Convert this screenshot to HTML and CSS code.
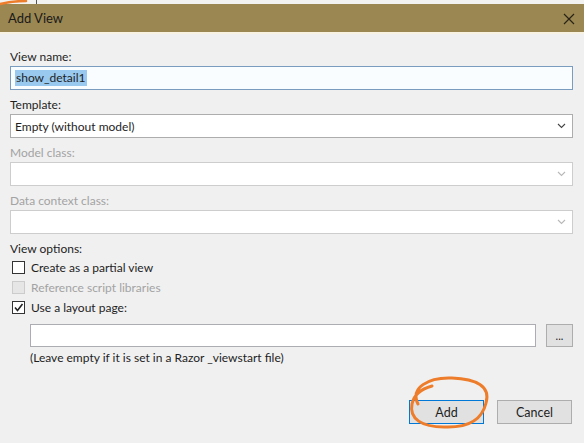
FILE: index.html
```html
<!DOCTYPE html>
<html lang="en">
<head>
    <meta charset="UTF-8">
    <title>Add View</title>
    <link rel="stylesheet" href="styles.css">
</head>
<body>
    <div class="strip"><span class="strip-line"></span></div>
    <div class="titlebar">
        <span class="title">Add View</span>
        <svg class="close" width="12" height="12" viewBox="0 0 12 12">
            <path d="M1 1 L11 11 M11 1 L1 11" stroke="#2a2418" stroke-width="1.2" fill="none"/>
        </svg>
    </div>
    <div class="titleedge"></div>

    <div class="content">
        <div class="field">
            <label class="lbl">View name:</label>
            <div class="textbox focused"><span class="sel">show_detail1</span></div>
        </div>
        <div class="field">
            <label class="lbl">Template:</label>
            <div class="combo">
                <span>Empty (without model)</span>
                <svg class="chev" width="9" height="6" viewBox="0 0 9 6"><path d="M1 1 L4.5 4.5 L8 1" stroke="#444" stroke-width="1.1" fill="none"/></svg>
            </div>
        </div>
        <div class="field">
            <label class="lbl off">Model class:</label>
            <div class="combo disabled">
                <span></span>
                <svg class="chev" width="9" height="6" viewBox="0 0 9 6"><path d="M1 1 L4.5 4.5 L8 1" stroke="#b8b8b8" stroke-width="1.1" fill="none"/></svg>
            </div>
        </div>
        <div class="field">
            <label class="lbl off">Data context class:</label>
            <div class="combo disabled">
                <span></span>
                <svg class="chev" width="9" height="6" viewBox="0 0 9 6"><path d="M1 1 L4.5 4.5 L8 1" stroke="#b8b8b8" stroke-width="1.1" fill="none"/></svg>
            </div>
        </div>

        <div class="options">
            <div class="lbl">View options:</div>
            <div class="check-row"><span class="box"></span>Create as a partial view</div>
            <div class="check-row off"><span class="box dim"></span>Reference script libraries</div>
            <div class="check-row">
                <span class="box">
                    <svg width="11" height="11" viewBox="0 0 11 11"><path d="M2 5.5 L4.5 8.5 L9.5 2" stroke="#222" stroke-width="1.6" fill="none"/></svg>
                </span>Use a layout page:
            </div>
            <div class="layout-row">
                <div class="textbox plain"></div>
                <button class="btn small">...</button>
            </div>
            <div class="hint">(Leave empty if it is set in a Razor _viewstart file)</div>
        </div>

        <div class="actions">
            <button class="btn primary">Add</button>
            <button class="btn">Cancel</button>
        </div>
    </div>

    <!-- marker scribbles on top of the screenshot -->
    <svg class="marker" width="584" height="443" viewBox="0 0 584 443">
        <path d="M0 4 C8 2, 16 1, 26 1" stroke="#ee7d2b" stroke-width="2.5" fill="none" stroke-linecap="round"/>
        <path d="M418 404 C410 388, 428 377, 452 378 C476 379, 491 386, 486 403 C482 420, 468 428, 444 427 C422 427, 409 419, 412 404 C414 394, 421 389, 432 386" stroke="#ee7d2b" stroke-width="3" fill="none" stroke-linecap="round"/>
    </svg>
</body>
</html>
```

FILE: styles.css
```css
body {
    margin: 0;
    width: 584px;
    height: 443px;
    overflow: hidden;
    background-color: #f0f0f0;
    font-family: Lato, "Noto Sans", sans-serif;
    font-size: 12px;
    color: #1e1e1e;
    position: relative;
}
.strip {
    height: 4px;
    background-color: #f2f2f0;
    position: relative;
}
.strip-line {
    position: absolute;
    left: 36px;
    top: 0;
    width: 1px;
    height: 4px;
    background-color: #555;
}
.titlebar {
    height: 28px;
    background-color: #9b8752;
    display: flex;
    align-items: center;
    justify-content: space-between;
    padding: 0 9px 0 8px;
}
.title {
    font-size: 13px;
    color: #1a1a1a;
}
.close {
    margin-top: 1px;
}
.titleedge {
    height: 2px;
    background-color: #f7f2e2;
}
.content {
    padding: 15px 11px 0 10px;
}
.field {
    margin-bottom: 7px;
}
.lbl {
    display: block;
    height: 16px;
    line-height: 16px;
    margin-bottom: 1px;
}
.off {
    color: #a3a3a3;
}
.textbox {
    height: 24px;
    box-sizing: border-box;
    border: 1px solid #abadb3;
    background-color: #fff;
    display: flex;
    align-items: center;
    padding-left: 4px;
}
.textbox.focused {
    border-color: #7a9cbe;
    background-color: #fafdff;
}
.sel {
    background-color: #99c9ef;
    line-height: 16px;
    padding: 0 1px;
}
.combo {
    height: 24px;
    box-sizing: border-box;
    border: 1px solid #adadad;
    background-color: #fff;
    display: flex;
    align-items: center;
    justify-content: space-between;
    padding: 0 6px 0 4px;
}
.combo.disabled {
    border-color: #cdcdcd;
}
.options .lbl {
    margin-bottom: 0;
}
.check-row {
    height: 20px;
    display: flex;
    align-items: center;
    padding-left: 2px;
}
.box {
    width: 13px;
    height: 13px;
    box-sizing: border-box;
    border: 1px solid #333;
    background-color: #fff;
    margin-right: 6px;
    display: flex;
    align-items: center;
    justify-content: center;
}
.box.dim {
    border-color: #cccccc;
    background-color: #e6e6e6;
}
.layout-row {
    display: flex;
    gap: 10px;
    margin-top: 7px;
    padding-left: 20px;
}
.layout-row .textbox {
    flex: 1;
    height: 23px;
}
.btn {
    font-family: inherit;
    font-size: 12.5px;
    color: #1e1e1e;
    background-color: #e1e1e1;
    border: 1px solid #adadad;
    width: 75px;
    height: 24px;
    padding: 0;
}
.btn.small {
    width: 27px;
    height: 23px;
    font-size: 11px;
}
.btn.primary {
    border-color: #0078d7;
}
.hint {
    padding-left: 20px;
    margin-top: 3px;
    line-height: 16px;
}
.actions {
    display: flex;
    justify-content: flex-end;
    gap: 13px;
    margin-top: 34px;
    padding-right: 1px;
}
.marker {
    position: absolute;
    left: 0;
    top: 0;
    pointer-events: none;
}
```
